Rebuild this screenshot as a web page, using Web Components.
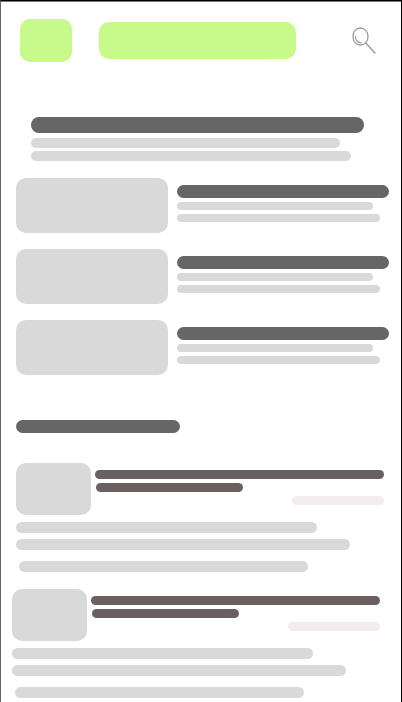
<!DOCTYPE html>
<html lang="en">
<head>
<meta charset="utf-8">
<meta name="viewport" content="width=device-width, initial-scale=1">
<title>Feed wireframe</title>
<style>
  body { margin: 0; background: #fff; font-family: "Liberation Sans", sans-serif; }
</style>
</head>
<body>
<wire-page>
  <wire-header></wire-header>
  <wire-intro></wire-intro>
  <wire-list>
    <wire-card></wire-card>
    <wire-card></wire-card>
    <wire-card></wire-card>
  </wire-list>
  <wire-section>
    <wire-post></wire-post>
    <wire-post class="wide"></wire-post>
  </wire-section>
</wire-page>

<script>
const define = (name, html) => {
  const template = document.createElement('template');
  template.innerHTML = html;
  customElements.define(name, class extends HTMLElement {
    constructor() {
      super();
      this.attachShadow({ mode: 'open' }).append(template.content.cloneNode(true));
    }
  });
};

// A rounded block; --h sets the height, --c the colour.
define('wire-bar', `
  <style>
    :host { display: block; box-sizing: border-box; height: var(--h, 11px); border-radius: var(--r, 8px); background: var(--c, #d9d9d9); }
  </style>`);

define('wire-page', `
  <style>
    :host {
      display: flex; flex-direction: column; box-sizing: border-box; min-height: 100vh;
      padding: 18px 0 4px;
      border: solid #000; border-width: 1px 1px 0; border-left-color: #666;
      box-shadow: inset 0 1px #777;
    }
  </style>
  <slot></slot>`);

define('wire-header', `
  <style>
    :host { display: flex; align-items: center; padding: 0 25px 0 19px; --c: #c8fa8b; --r: 10px; }
    .logo { --h: 43px; width: 52px; margin-right: 27px; }
    .title { --h: 37px; flex: 1; margin-right: 56px; }
    button { display: block; padding: 0; border: 0; background: none; cursor: pointer; }
    svg { display: block; }
  </style>
  <wire-bar class="logo"></wire-bar>
  <wire-bar class="title"></wire-bar>
  <button type="button" aria-label="Search">
    <svg width="24" height="27" viewBox="0 0 24 27" fill="none" stroke="#a39999" stroke-width="1.3">
      <path d="M8.4 1C12.8 1 16 4.500 16 9.400C16 14.500 12.800 18 8.400 18C4 18 1 14.500 1 9.400C1 4.500 4 1 8.400 1Z"/>
      <path d="M3.300 9.200C3.600 13 6 15.700 9.700 15.800"/>
      <path d="M13.400 15.500L23.300 26.400" stroke-width="1.500"/>
    </svg>
  </button>`);

define('wire-intro', `
  <style>
    :host { display: block; padding: 55px 37px 0 30px; }
    .title { --h: 16px; --c: #666; margin-bottom: 5px; }
    .line { --h: 10px; }
    .first { margin: 0 24px 3px 0; }
    .second { margin-right: 13px; }
  </style>
  <wire-bar class="title"></wire-bar>
  <wire-bar class="line first"></wire-bar>
  <wire-bar class="line second"></wire-bar>`);

define('wire-list', `
  <style>
    :host { display: grid; gap: 16px; padding: 17px 12px 0 15px; }
  </style>
  <slot></slot>`);

define('wire-card', `
  <style>
    :host { display: grid; grid-template-columns: 152fr 212fr; column-gap: 9px; }
    .image { --h: 55px; --r: 10px; }
    .text { padding-top: 7px; }
    .title { --h: 13px; --c: #666; margin-bottom: 4px; }
    .line { --h: 8px; }
    .first { margin: 0 16px 4px 0; }
    .second { margin-right: 9px; }
  </style>
  <wire-bar class="image"></wire-bar>
  <div class="text">
    <wire-bar class="title"></wire-bar>
    <wire-bar class="line first"></wire-bar>
    <wire-bar class="line second"></wire-bar>
  </div>`);

define('wire-section', `
  <style>
    :host { display: block; padding-top: 45px; }
    .title { --h: 13px; --c: #666; width: 41%; margin: 0 0 30px 15px; }
    .posts { display: grid; gap: 17px; padding: 0 17px 0 15px; }
    ::slotted(.wide) { margin: 0 4px 0 -4px; }
  </style>
  <wire-bar class="title"></wire-bar>
  <div class="posts"><slot></slot></div>`);

define('wire-post', `
  <style>
    :host { display: block; }
    .head { display: flex; gap: 4px; margin-bottom: 7px; }
    .avatar { --h: 52px; --r: 10px; width: 75px; }
    .text { flex: 1; padding-top: 7px; --h: 9px; }
    .name, .role { --c: #6a6061; }
    .name { margin-bottom: 4px; }
    .role { width: 51%; margin: 0 0 4px 1px; }
    .date { --c: #f2ecec; width: 32%; margin-left: auto; }
    .a { margin: 0 67px 6px 0; }
    .b { margin: 0 34px 11px 0; }
    .c { margin: 0 76px 0 3px; }
  </style>
  <div class="head">
    <wire-bar class="avatar"></wire-bar>
    <div class="text">
      <wire-bar class="name"></wire-bar>
      <wire-bar class="role"></wire-bar>
      <wire-bar class="date"></wire-bar>
    </div>
  </div>
  <wire-bar class="a"></wire-bar>
  <wire-bar class="b"></wire-bar>
  <wire-bar class="c"></wire-bar>`);
</script>
</body>
</html>
